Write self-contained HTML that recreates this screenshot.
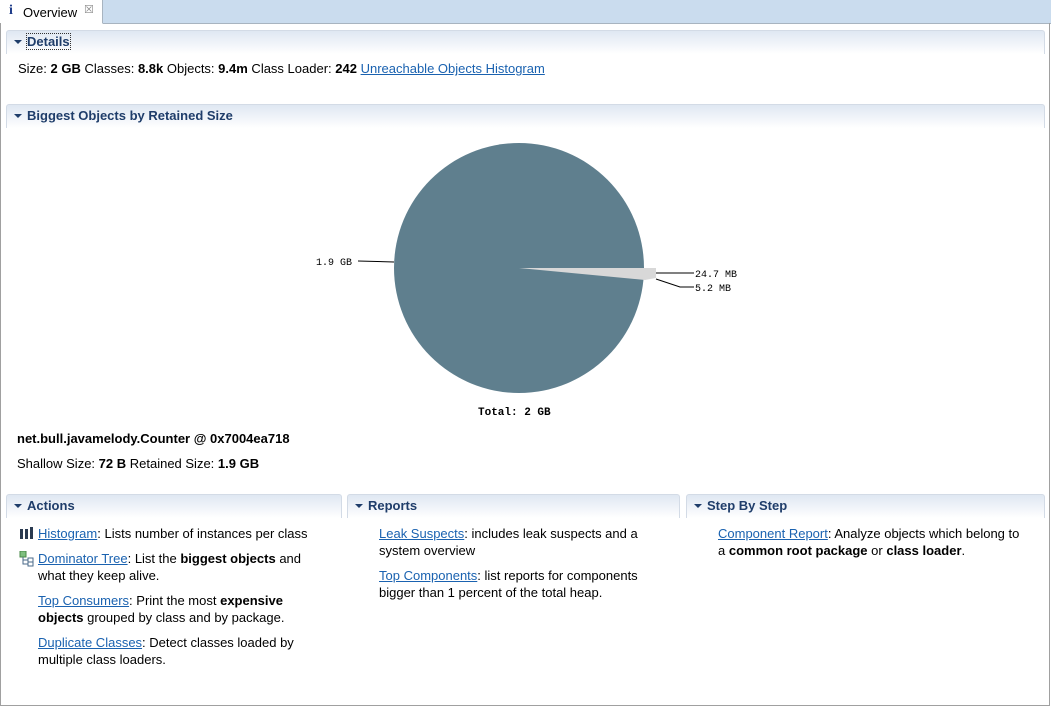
<!DOCTYPE html>
<html><head><meta charset="utf-8"><style>
*{margin:0;padding:0;box-sizing:border-box}
body{width:1051px;height:706px;overflow:hidden;background:#fff;font-family:"Liberation Sans",sans-serif;font-size:13px;color:#000;position:relative}
.abs{position:absolute;white-space:nowrap}
a{color:#1a62b0;text-decoration:underline}
.tabbar{position:absolute;left:0;top:0;width:1051px;height:24px;background:#cadcee;border-bottom:1px solid #a8b4c0}
.tab{position:absolute;left:0;top:0;width:103px;height:24px;background:#fff;border-right:1px solid #a8b4c0;border-bottom:1px solid #fff}
.frame{position:absolute;left:0;top:23px;width:1050px;height:683px;border:1px solid #a0a0a0;border-top:none}
.hdr{position:absolute;height:24px;border:1px solid #d3dbe6;border-bottom:none;border-radius:3px 3px 0 0;background:linear-gradient(#dfe7f2,#fff);color:#1f3d6a;font-weight:bold;font-size:13px;padding:3px 0 0 20px}
.hdr:before{content:"";position:absolute;left:7px;top:9px;border-left:4px solid transparent;border-right:4px solid transparent;border-top:4px solid #1f3d6a}
.t{line-height:17px}
</style></head><body>
<div class="tabbar"></div>
<div class="tab"><span class="abs" style="left:9px;top:3px;color:#1f3d8a;font-family:'Liberation Serif',serif;font-weight:bold;font-size:14px">i</span><span class="abs" style="left:23px;top:5px">Overview</span><span class="abs" style="left:84px;top:3px;color:#888;font-size:11px">☒</span></div>
<div class="frame"></div>

<div class="hdr" style="left:6px;top:30px;width:1039px"><span style="outline:1px dotted #333">Details</span></div>
<div class="abs" style="left:18px;top:61px">Size: <b>2 GB</b> Classes: <b>8.8k</b> Objects: <b>9.4m</b> Class Loader: <b>242</b> <a>Unreachable Objects Histogram</a></div>

<div class="hdr" style="left:6px;top:104px;width:1039px">Biggest Objects by Retained Size</div>

<svg class="abs" style="left:0;top:0" width="1051" height="430">
<circle cx="519" cy="268" r="125" fill="#5f7f8e"/>
<polygon points="519,268 656,268 656,278 645,280" fill="#d8d8d8"/>
<polyline points="358,261 394,262" stroke="#000" fill="none"/>
<polyline points="656,273 694,273" stroke="#000" fill="none"/>
<polyline points="656,279 680,287 694,287" stroke="#000" fill="none"/>
<text x="316" y="265" font-family="Liberation Mono" font-size="10">1.9 GB</text>
<text x="695" y="277" font-family="Liberation Mono" font-size="10">24.7 MB</text>
<text x="695" y="291" font-family="Liberation Mono" font-size="10">5.2 MB</text>
<text x="478" y="415" font-family="Liberation Mono" font-size="11" font-weight="bold">Total: 2 GB</text>
</svg>

<div class="abs" style="left:17px;top:431px;font-weight:bold">net.bull.javamelody.Counter @ 0x7004ea718</div>
<div class="abs" style="left:17px;top:456px">Shallow Size: <b>72 B</b> Retained Size: <b>1.9 GB</b></div>

<div class="hdr" style="left:6px;top:494px;width:336px">Actions</div>
<div class="hdr" style="left:347px;top:494px;width:333px">Reports</div>
<div class="hdr" style="left:686px;top:494px;width:359px">Step By Step</div>

<svg class="abs" style="left:20px;top:527px" width="14" height="14"><rect x="0" y="2" width="3" height="10" fill="#2a3a50"/><rect x="5" y="2" width="3" height="10" fill="#2a3a50"/><rect x="10" y="0" width="3" height="12" fill="#2a3a50"/></svg>
<svg class="abs" style="left:19px;top:551px" width="16" height="16"><rect x="1" y="0" width="6" height="6" fill="#7fbf7f" stroke="#4a8a4a"/><path d="M4 6V13H9M4 9H9" stroke="#4a6a8a" fill="none"/><rect x="9" y="7" width="5" height="4" fill="#fff" stroke="#4a6a8a"/><rect x="9" y="11" width="5" height="4" fill="#fff" stroke="#4a6a8a"/></svg>
<div class="abs t" style="left:38px;top:525px"><a>Histogram</a>: Lists number of instances per class</div>
<div class="abs t" style="left:38px;top:550px"><a>Dominator Tree</a>: List the <b>biggest objects</b> and<br>what they keep alive.</div>
<div class="abs t" style="left:38px;top:592px"><a>Top Consumers</a>: Print the most <b>expensive</b><br><b>objects</b> grouped by class and by package.</div>
<div class="abs t" style="left:38px;top:634px"><a>Duplicate Classes</a>: Detect classes loaded by<br>multiple class loaders.</div>

<div class="abs t" style="left:379px;top:525px"><a>Leak Suspects</a>: includes leak suspects and a<br>system overview</div>
<div class="abs t" style="left:379px;top:567px"><a>Top Components</a>: list reports for components<br>bigger than 1 percent of the total heap.</div>

<div class="abs t" style="left:718px;top:525px"><a>Component Report</a>: Analyze objects which belong to<br>a <b>common root package</b> or <b>class loader</b>.</div>
</body></html>
